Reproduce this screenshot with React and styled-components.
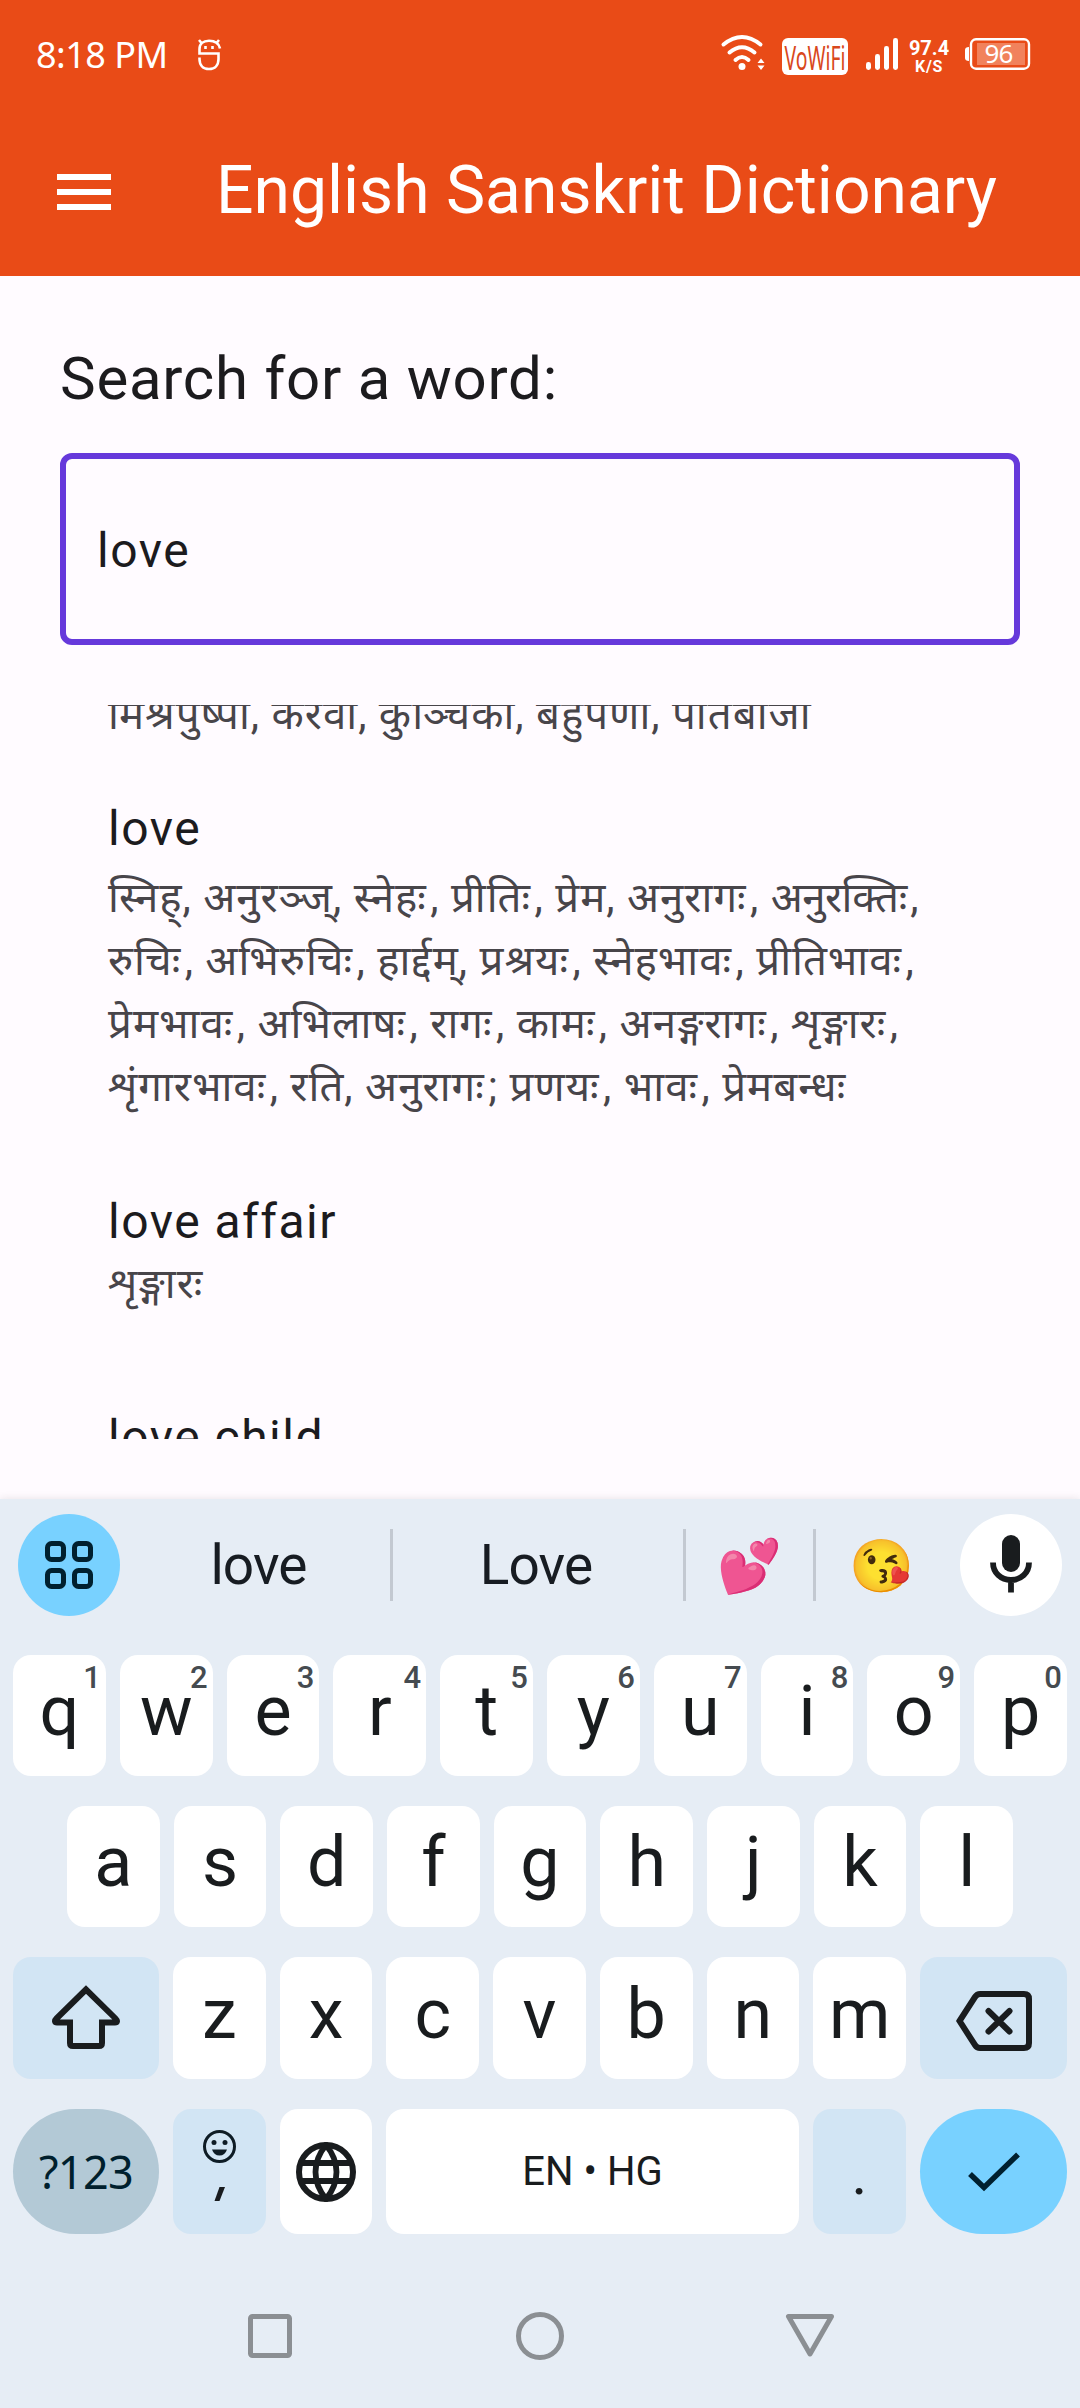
import React from "react";
import styled, { createGlobalStyle } from "styled-components";

const GlobalStyle = createGlobalStyle`
  * { box-sizing: border-box; }
  body { margin: 0; background: #fffbff; }
`;

const ui = `Roboto, "Noto Sans", sans-serif`;
const noto = `"Noto Sans", "Open Sans", sans-serif`;
const deva = `Roboto, "Noto Sans Devanagari", "Noto Sans", sans-serif`;

const Screen = styled.div`
  width: 1080px;
  height: 2408px;
  overflow: hidden;
  display: flex;
  flex-direction: column;
  background: #fffbff;
  font-family: ${ui};
  color: #1c1b1e;
`;

const Header = styled.header`
  height: 276px;
  flex: none;
  background: #e94b17;
  color: #fff;
`;

const StatusBar = styled.div`
  height: 112px;
  padding: 0 50px 4px 36px;
  display: flex;
  align-items: center;
  justify-content: space-between;
`;

const StatusGroup = styled.div`
  display: flex;
  align-items: center;
`;

const Clock = styled.span`
  font: 400 36px/50px ${noto};
  letter-spacing: -0.5px;
  width: 161px;
  padding-top: 1px;
  white-space: nowrap;
`;

const NetSpeed = styled.div`
  width: 42px;
  margin: 0 15px 0 10px;
  padding-top: 7px;
  display: flex;
  flex-direction: column;
  align-items: center;
  font-weight: 700;
  font-size: 20px;
  line-height: 18px;
`;

const Unit = styled.span`
  font-size: 16px;
  line-height: 19px;
  letter-spacing: 0.6px;
`;

const AppBar = styled.div`
  height: 164px;
  padding: 0 0 8px 57px;
  display: flex;
  align-items: center;
`;

const MenuButton = styled.div`
  width: 54px;
  height: 36px;
  margin: 4px 105px 0 0;
  display: flex;
  flex-direction: column;
  justify-content: space-between;
  i { height: 6px; background: #fff; }
`;

const AppTitle = styled.h1`
  margin: 1px 0 0;
  font-weight: 400;
  font-size: 66px;
  line-height: 80px;
  white-space: nowrap;
`;

const Content = styled.main`
  height: 1223px;
  flex: none;
  padding: 67px 60px 0;
`;

const Label = styled.label`
  display: block;
  height: 72px;
  margin-bottom: 38px;
  font-size: 60px;
  line-height: 72px;
  letter-spacing: 0.75px;
`;

const Field = styled.div`
  height: 192px;
  border: 6px solid #6639db;
  border-radius: 12px;
  padding: 3px 30px 0 31px;
  display: flex;
  align-items: center;
  font-size: 48px;
  line-height: 56px;
  letter-spacing: 1.5px;
`;

const Results = styled.div`
  height: 734px;
  margin-top: 60px;
  padding: 0 48px;
  overflow: hidden;
`;

const Entry = styled.section`
  display: flow-root;
  height: ${(p) => p.$height}px;
`;

const Word = styled.h2`
  margin: 0;
  font-weight: 400;
  font-size: 48px;
  line-height: 64px;
  letter-spacing: 1.5px;
`;

const Meaning = styled.div`
  margin-top: ${(p) => p.$offset}px;
  font-family: ${deva};
  font-size: 42px;
  color: #48454a;
`;

const MeaningLine = styled.p`
  margin: 0;
  line-height: 63px;
  white-space: pre;
  letter-spacing: 1px;
`;

const Visarga = styled.span`
  margin-right: 3.5px;
  ${(p) => p.$tight && "letter-spacing: -0.6px;"}
`;

const Keyboard = styled.div`
  flex: 1;
  background: #e6edf5;
  box-shadow: 0 0 8px rgba(60, 40, 40, 0.12);
  padding: 15px 13px 0;
`;

const Suggestions = styled.div`
  height: 102px;
  margin: 0 5px 39px;
  display: flex;
  align-items: center;
  justify-content: space-between;
`;

const RoundButton = styled.div`
  width: 102px;
  height: 102px;
  flex: none;
  border-radius: 50%;
  display: flex;
  align-items: center;
  justify-content: center;
  background: ${(p) => p.$bg};
`;

const Candidates = styled.div`
  flex: 1;
  display: flex;
  align-items: center;
`;

const Suggestion = styled.div`
  width: ${(p) => p.$width}px;
  padding-left: ${(p) => p.$indent || 0}px;
  padding-right: ${(p) => p.$outdent || 0}px;
  padding-top: ${(p) => (p.$emoji ? 3 : 0)}px;
  display: flex;
  justify-content: center;
  font-size: ${(p) => (p.$emoji ? 52 : 55)}px;
  line-height: 72px;
  letter-spacing: ${(p) => (p.$emoji ? 0 : -0.9)}px;
  color: #171c22;
`;

const Divider = styled.i`
  width: 3px;
  height: 72px;
  background: #c3c9d1;
`;

const KeyRow = styled.div`
  display: flex;
  gap: 14px;
  height: ${(p) => p.$height || 121}px;
  margin-bottom: 30px;
  padding: 0 ${(p) => p.$inset || 0}px;
`;

const keyColors = {
  plain: "#ffffff",
  tonal: "#d2e5f4",
  muted: "#b3c9d6",
  accent: "#78d1ff",
};

const Key = styled.div`
  position: relative;
  flex: ${(p) => (p.$width ? `0 0 ${p.$width}px` : "1 1 0")};
  min-width: 0;
  display: flex;
  align-items: center;
  justify-content: center;
  border-radius: ${(p) => (p.$pill ? 63 : 18)}px;
  background: ${(p) => keyColors[p.$tone || "plain"]};
  color: #191c1e;
`;

const Letter = styled.span`
  font-size: 70px;
  line-height: 80px;
  padding-bottom: 9px;
`;

const Period = styled.span`
  font-size: 60px;
  line-height: 80px;
  margin-top: 4px;
`;

const Hint = styled.span`
  position: absolute;
  right: 5px;
  top: 5px;
  font-size: 31px;
  line-height: 36px;
  font-weight: 500;
  color: #454b50;
`;

const Symbols = styled.span`
  font: 400 45px/60px ${noto};
  letter-spacing: -0.7px;
  color: #001f2d;
`;

const SpaceLabel = styled.span`
  font-size: 40px;
  line-height: 48px;
`;

const NavBar = styled.nav`
  height: 72px;
  margin: 66px 122px 0;
  display: flex;
  align-items: center;
  justify-content: space-between;
  padding: 0 110px;
`;

const StatusIcon = styled.svg`
  flex: none;
  overflow: visible;
  margin: ${(p) => p.$margin || "0"};
`;

const KeyIcon = styled.svg`
  flex: none;
  margin-top: ${(p) => p.$shift || 0}px;
`;

const Mascot = () => (
  <StatusIcon width="24" height="34" viewBox="0 0 24 34" fill="none" stroke="#fff" strokeWidth="2.6" $margin="-1px 0 0">
    <path d="M23 11.500C22 6.500 18 3.800 12 3.800S2.500 7 2.500 12V16.500H21.500V22C21.500 28 18 32 12 32S2.500 28 2.500 22V20.500" />
    <path d="M4.500 6L2 3M19.500 6L22 3" />
    <path d="M8.500 9V12M15.500 9V12" />
  </StatusIcon>
);

const Wifi = () => (
  <StatusIcon width="44" height="36" viewBox="0 0 44 36" fill="none" stroke="#fff" strokeWidth="4" strokeLinecap="round" $margin="-2px 0 0">
    <path d="M2.500 9.500Q21 -5.500 39.500 9.500M8.500 17.500Q21 7 33.500 17.500M14.500 25Q21 19 27.500 25" />
    <circle cx="21" cy="31.500" r="3.500" fill="#fff" stroke="none" />
    <path d="M36.500 28L40 23.500L43.500 28ZM36.500 30.500L40 35L43.500 30.500Z" fill="#fff" stroke="none" />
  </StatusIcon>
);

const VoWifi = () => (
  <StatusIcon width="66" height="38" viewBox="0 0 66 38" $margin="5px 18px 0 17px">
    <rect width="66" height="37" rx="6" fill="#fff" />
    <text x="2.500" y="32" fontSize="32" fontFamily="Noto Sans" fill="#d9481c" textLength="61" lengthAdjust="spacingAndGlyphs">VoWiFi</text>
  </StatusIcon>
);

const Signal = () => (
  <StatusIcon width="32" height="32" viewBox="0 0 32 32" fill="#fff">
    <rect x="0" y="24" width="5" height="8" rx="2.400" />
    <rect x="9" y="16" width="5" height="16" rx="2.400" />
    <rect x="18" y="8" width="5" height="24" rx="2.400" />
    <rect x="27" y="0" width="5" height="32" rx="2.400" />
  </StatusIcon>
);

const Battery = () => (
  <StatusIcon width="65" height="32" viewBox="0 0 65 32">
    <path d="M4 9Q0 9 0 12V20Q0 23 4 23Z" fill="#fff" />
    <rect x="6" y="1.300" width="58" height="29.400" rx="5" fill="none" stroke="#fff" strokeWidth="2.400" />
    <rect x="12" y="5" width="48" height="22" fill="#f1825c" />
    <text x="33.500" y="25" fontSize="26" fontFamily="Noto Sans" fill="#fff" textAnchor="middle" letterSpacing="-0.8">96</text>
  </StatusIcon>
);

const Grid = () => (
  <KeyIcon width="48" height="48" viewBox="0 0 48 48" fill="none" stroke="#00202f" strokeWidth="5">
    {[[2.5, 2.5], [29.5, 2.5], [2.5, 29.5], [29.5, 29.5]].map(([x, y]) => (
      <rect key={x + "-" + y} x={x} y={y} width="16" height="16" rx="4" />
    ))}
  </KeyIcon>
);

const Mic = () => (
  <KeyIcon width="42" height="58" viewBox="0 0 42 58" $shift={-3}>
    <rect x="12" y="0" width="18" height="37" rx="9" fill="#191c1e" />
    <path d="M3 27.500C3 38 11 45 21 45S39 38 39 27.500M21 45V57.500" fill="none" stroke="#191c1e" strokeWidth="5.800" />
  </KeyIcon>
);

const Shift = () => (
  <KeyIcon width="68" height="64" viewBox="0 0 68 64" fill="none" stroke="#191c1e" strokeWidth="6" $shift={-2}>
    <path d="M34 4.500L4.500 33.500C2 36 3 37.500 5 37.500H18V58Q18 61 21 61H47Q50 61 50 58V37.500H63C65 37.500 66 36 63.500 33.500Z" />
  </KeyIcon>
);

const Backspace = () => (
  <KeyIcon width="76" height="60" viewBox="0 0 76 60" fill="none" stroke="#191c1e" strokeWidth="6" $shift={5}>
    <path d="M3.500 30L19 6Q21 3 24 3H68Q73 3 73 8V52Q73 57 68 57H24Q21 57 19 54Z" />
    <path d="M32.500 20L53.500 40.500M53.500 20L32.500 40.500" strokeLinecap="round" />
  </KeyIcon>
);

const EmojiComma = () => (
  <KeyIcon width="33" height="72" viewBox="0 0 33 72" $shift={-11}>
    <circle cx="16.500" cy="16.500" r="15" fill="none" stroke="#0e1c25" strokeWidth="3" />
    <circle cx="11" cy="12.500" r="2.500" fill="#0e1c25" />
    <circle cx="22" cy="12.500" r="2.500" fill="#0e1c25" />
    <path d="M9 19.500H24Q22 25.500 16.500 25.500T9 19.500Z" fill="#0e1c25" />
    <path d="M16.500 57H22L16.500 71H11.500Z" fill="#191c1e" />
  </KeyIcon>
);

const Globe = () => (
  <KeyIcon width="60" height="60" viewBox="0 0 60 60" fill="none" stroke="#191c1e" strokeWidth="6">
    <circle cx="30" cy="30" r="27" />
    <path d="M4 21H56M4 39H56" strokeWidth="5.800" />
    <path d="M30 3C16 20 16 40 30 57C44 40 44 20 30 3Z" strokeWidth="5.800" />
  </KeyIcon>
);

const Check = () => (
  <KeyIcon width="52" height="40" viewBox="0 0 52 40" fill="none" stroke="#00202f" strokeWidth="5.500">
    <path d="M2 22L16 35.500L50 2.500" />
  </KeyIcon>
);

const NavIcon = styled.svg`
  width: 50px;
  height: 50px;
  fill: none;
  stroke: #8b8f93;
  stroke-width: 5;
  stroke-linejoin: round;
`;

const letters = (s) => s.split("").map((c) => <Key key={c}><Letter>{c}</Letter></Key>);

/* Gives every word that ends in a visarga a little room before its comma. */
const Sanskrit = ({ text }) => (
  <MeaningLine>
    {text.split(/([^\s,;]+ः)/).map((part, i) =>
      part.endsWith("ः") ? <Visarga key={i} $tight={part.includes("क्ति")}>{part}</Visarga> : part
    )}
  </MeaningLine>
);

export default function App() {
  return (
    <Screen>
      <GlobalStyle />
      <Header>
        <StatusBar>
          <StatusGroup>
            <Clock>8:18 PM</Clock>
            <Mascot />
          </StatusGroup>
          <StatusGroup>
            <Wifi />
            <VoWifi />
            <Signal />
            <NetSpeed>97.4<Unit>K/S</Unit></NetSpeed>
            <Battery />
          </StatusGroup>
        </StatusBar>
        <AppBar>
          <MenuButton><i /><i /><i /></MenuButton>
          <AppTitle>English Sanskrit Dictionary</AppTitle>
        </AppBar>
      </Header>

      <Content>
        <Label>Search for a word:</Label>
        <Field>love</Field>
        <Results>
          <Entry $height={92}>
            <Meaning $offset={-22}>
              <Sanskrit text="मिश्रपुष्पा, केरवी, कुञ्चिका, बहुपर्णी, पीतबीजा" />
            </Meaning>
          </Entry>
          <Entry $height={393}>
            <Word>love</Word>
            <Meaning $offset={5}>
              <Sanskrit text="स्निह्, अनुरञ्ज्, स्नेहः, प्रीतिः, प्रेम, अनुरागः, अनुरक्तिः," />
              <Sanskrit text="रुचिः, अभिरुचिः, हार्द्दम्, प्रश्रयः, स्नेहभावः, प्रीतिभावः," />
              <Sanskrit text="प्रेमभावः, अभिलाषः, रागः, कामः, अनङ्गरागः, शृङ्गारः," />
              <Sanskrit text="शृंगारभावः, रति, अनुरागः; प्रणयः, भावः, प्रेमबन्धः" />
            </Meaning>
          </Entry>
          <Entry $height={216}>
            <Word>love affair</Word>
            <Meaning $offset={-2}>
              <Sanskrit text="शृङ्गारः" />
            </Meaning>
          </Entry>
          <Entry $height={216}>
            <Word>love child</Word>
          </Entry>
        </Results>
      </Content>

      <Keyboard>
        <Suggestions>
          <RoundButton $bg="#78d1ff"><Grid /></RoundButton>
          <Candidates>
            <Suggestion $width={270} $indent={7}>love</Suggestion>
            <Divider />
            <Suggestion $width={290} $outdent={4}>Love</Suggestion>
            <Divider />
            <Suggestion $width={127} $emoji>💕</Suggestion>
            <Divider />
            <Suggestion $width={131} $emoji>😘</Suggestion>
          </Candidates>
          <RoundButton $bg="#fff"><Mic /></RoundButton>
        </Suggestions>

        <KeyRow>
          {"qwertyuiop".split("").map((c, i) => (
            <Key key={c}><Letter>{c}</Letter><Hint>{(i + 1) % 10}</Hint></Key>
          ))}
        </KeyRow>
        <KeyRow $inset={54}>{letters("asdfghjkl")}</KeyRow>
        <KeyRow $height={122}>
          <Key $width={146} $tone="tonal"><Shift /></Key>
          {letters("zxcvbnm")}
          <Key $width={147} $tone="tonal"><Backspace /></Key>
        </KeyRow>
        <KeyRow $height={125}>
          <Key $width={146} $tone="muted" $pill><Symbols>?123</Symbols></Key>
          <Key $width={92.5} $tone="tonal"><EmojiComma /></Key>
          <Key $width={92.5}><Globe /></Key>
          <Key><SpaceLabel>EN • HG</SpaceLabel></Key>
          <Key $width={93} $tone="tonal"><Period>.</Period></Key>
          <Key $width={147} $tone="accent" $pill><Check /></Key>
        </KeyRow>
        <NavBar>
          <NavIcon viewBox="0 0 50 50"><rect x="5.500" y="5.500" width="39" height="39" rx="2" /></NavIcon>
          <NavIcon viewBox="0 0 50 50"><circle cx="25" cy="25" r="21.500" /></NavIcon>
          <NavIcon viewBox="0 0 50 50"><path d="M3.500 5.500H46.500L25 43Z" /></NavIcon>
        </NavBar>
      </Keyboard>
    </Screen>
  );
}
